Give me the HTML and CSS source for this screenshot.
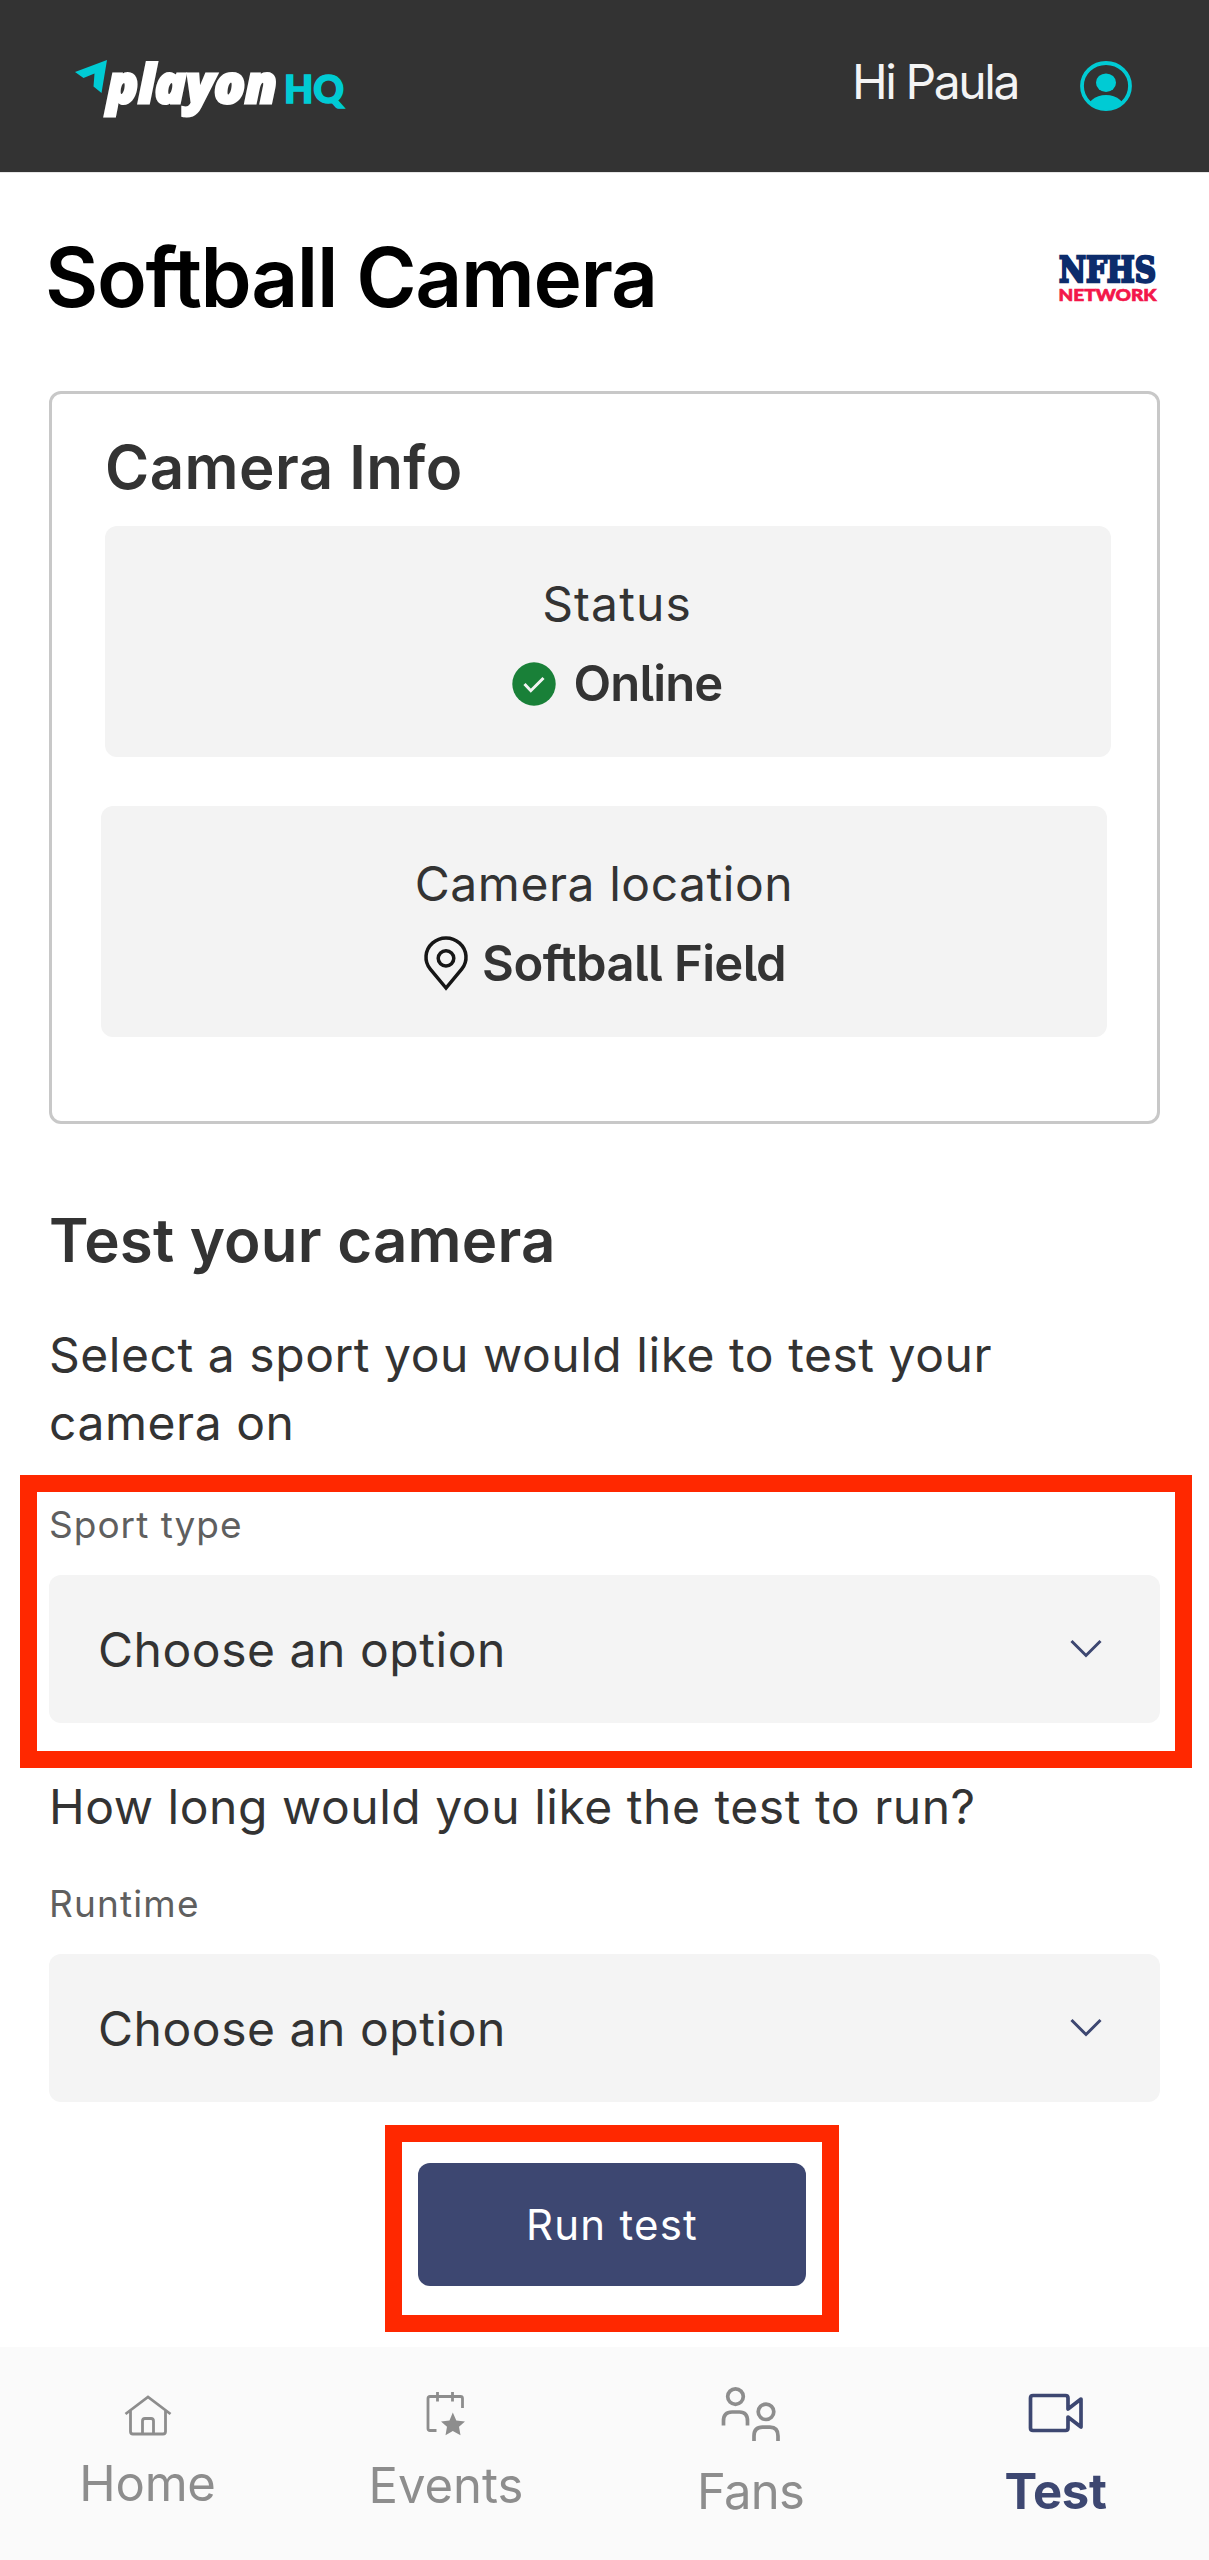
FILE: index.html
```html
<!DOCTYPE html>
<html lang="en">
<head>
<meta charset="utf-8">
<title>Softball Camera</title>
<link rel="stylesheet" href="styles.css">
</head>
<body>
<header class="topbar">
  <svg class="logo" width="276" height="66" viewBox="0 0 276 66" role="img" aria-label="playon HQ">
    <path d="M0 12 32 0 26.5 33 18.5 26.5 19.5 13.5 8.5 18Z" fill="#00cbd4"/>
    <text class="logo-word" x="32" y="42.500" textLength="170" lengthAdjust="spacingAndGlyphs">playon</text>
    <text class="logo-hq" x="209" y="42.500" textLength="60" lengthAdjust="spacingAndGlyphs">HQ</text>
  </svg>
  <div class="account">
    <span class="greeting">Hi Paula</span>
    <svg width="52" height="50" viewBox="0 0 52 50">
      <defs><clipPath id="face"><ellipse cx="26" cy="25" rx="24.500" ry="23.500"/></clipPath></defs>
      <ellipse cx="26" cy="25" rx="24" ry="23" fill="none" stroke="#00cbd4" stroke-width="3.800"/>
      <ellipse cx="26" cy="21.700" rx="10" ry="9.300" fill="#00cbd4"/>
      <ellipse cx="26" cy="51" rx="20" ry="17" fill="#00cbd4" clip-path="url(#face)"/>
    </svg>
  </div>
</header>

<main class="page">
  <div class="title-row">
    <h1 class="title">Softball Camera</h1>
    <svg class="nfhs" width="98" height="50" viewBox="0 0 98 50" role="img" aria-label="NFHS Network">
      <text class="nfhs-main" x="0" y="28" textLength="97" lengthAdjust="spacingAndGlyphs">NFHS</text>
      <text class="nfhs-sub" x="-0.500" y="46.800" textLength="98" lengthAdjust="spacingAndGlyphs">NETWORK</text>
    </svg>
  </div>

  <section class="card">
    <h2 class="heading">Camera Info</h2>
    <div class="info info-status">
      <div class="info-label status-label">Status</div>
      <div class="info-value">
        <svg width="44" height="44" viewBox="0 0 44 44"><circle cx="22" cy="22" r="21.700" fill="#198038"/><path d="M12.500 22 18.800 28.700 31.500 16" fill="none" stroke="#f3f3f3" stroke-width="3"/></svg>
        <span class="online">Online</span>
      </div>
    </div>
    <div class="info info-location">
      <div class="info-label">Camera location</div>
      <div class="info-value pin-row">
        <svg width="44" height="54" viewBox="0 0 44 54" fill="none" stroke="#161616" stroke-width="3.500"><path d="M22 51 6.300 32.200A20 19.300 0 1 1 37.700 32.200Z"/><ellipse cx="22" cy="21.300" rx="7.800" ry="7.600"/></svg>
        <span class="field-name">Softball Field</span>
      </div>
    </div>
  </section>

  <section class="test">
    <h2 class="heading test-heading">Test your camera</h2>
    <p class="copy">Select a sport you would like to test your<br>camera on</p>
    <div class="field">
      <span class="field-label">Sport type</span>
      <div class="select">
        <span>Choose an option</span>
        <svg width="32" height="20" viewBox="0 0 32 20" fill="none" stroke="#3d4771" stroke-width="3"><path d="M1.500 2 16 16.500 30.500 2"/></svg>
      </div>
      <div class="marker marker-field"></div>
    </div>
    <p class="copy question">How long would you like the test to run?</p>
    <div class="field">
      <span class="field-label runtime">Runtime</span>
      <div class="select">
        <span>Choose an option</span>
        <svg width="32" height="20" viewBox="0 0 32 20" fill="none" stroke="#3d4771" stroke-width="3"><path d="M1.500 2 16 16.500 30.500 2"/></svg>
      </div>
    </div>
    <div class="action">
      <button class="run" type="button">Run test</button>
      <div class="marker marker-run"></div>
    </div>
  </section>
</main>

<nav class="tabs">
  <a class="tab tab-home">
    <svg width="48" height="42" viewBox="0 0 48 42" fill="none" stroke="#8d8d8d" stroke-width="2.800"><path d="M1.500 19 24 2 46.500 19M6.500 16V36.500Q6.500 39 9 39H39Q41.500 39 41.500 36.500V16M18.500 39V26Q18.500 23.500 21 23.500H27Q29.500 23.500 29.500 26V39"/></svg>
    <span>Home</span>
  </a>
  <a class="tab tab-events">
    <svg width="40" height="44" viewBox="0 0 40 44" fill="none" stroke="#8d8d8d" stroke-width="2.800"><path d="M10.500 38.500H4Q2 38.500 2 36.500V6.500Q2 4.500 4 4.500H34.500Q36.500 4.500 36.500 6.500V16M11.500 0V9.500M26.500 0V9.500"/><path d="M26.800 20.500 30.300 28.500 39 29.500 33 34.700 34.500 43.300 26.800 39 19.500 43.300 21 34.700 15 29.500 23.500 28.500Z" fill="#8d8d8d" stroke="none"/></svg>
    <span>Events</span>
  </a>
  <a class="tab tab-fans">
    <svg width="60" height="55" viewBox="0 0 60 55" fill="none" stroke="#8d8d8d" stroke-width="3.700"><ellipse cx="14.500" cy="9.600" rx="7.800" ry="7.700"/><path d="M2.500 38.500V34Q2.500 25 11 25H18.500Q26.500 25 26.500 34V38.500"/><ellipse cx="45" cy="24.800" rx="7.800" ry="7.700"/><path d="M33 54V49Q33 40.200 41.500 40.200H49Q57 40.200 57 49V54"/></svg>
    <span>Fans</span>
  </a>
  <a class="tab tab-test">
    <svg width="56" height="40" viewBox="0 0 56 40" fill="none" stroke="#3d4771" stroke-width="3.700" stroke-linejoin="round"><path d="M40 16V5Q40 2.500 37.500 2.500H5Q2.500 2.500 2.500 5V35Q2.500 37.500 5 37.500H37.500Q40 37.500 40 35V24L53 34V6Z"/></svg>
    <span>Test</span>
  </a>
</nav>
</body>
</html>
```
FILE: styles.css
```css
* { box-sizing: border-box; }

body {
  margin: 0;
  height: 2560px;
  display: flex;
  flex-direction: column;
  background: #fff;
  color: #333;
  font-family: Inter, "Liberation Sans", sans-serif;
  font-size: 48px;
}

h1, h2, p { margin: 0; }
svg { display: block; flex: none; overflow: visible; }

.topbar {
  height: 173px;
  display: flex;
  justify-content: space-between;
  align-items: flex-start;
  padding: 60px 77px 0 75px;
  background: #333;
  border-bottom: 1px solid #e6e6e6;
}
.logo-word {
  font: italic 800 53px "Open Sans", sans-serif;
  fill: #fff;
  stroke: #fff;
  stroke-width: 3px;
}
.logo-hq {
  font: 900 37px Lato, sans-serif;
  fill: #00cbd4;
  stroke: #00cbd4;
  stroke-width: 1.5px;
}
.account { display: flex; gap: 62px; padding-top: 1px; }
.greeting {
  line-height: 42px;
  color: #f4f4f4;
  letter-spacing: -2.430px;
}

.page { height: 2174px; padding: 56px 49px 0; }
.title-row { height: 98px; display: flex; justify-content: space-between; }
.title {
  margin-left: -4px;
  color: #000;
  font-size: 82px;
  font-weight: 600;
  line-height: 98px;
  letter-spacing: -1.390px;
  white-space: nowrap;
}
.nfhs { margin: 25px 3px 0 0; }
.nfhs-main {
  font: bold 36px "DejaVu Serif", serif;
  fill: #0c2c6c;
  stroke: #0c2c6c;
  stroke-width: 2.600px;
}
.nfhs-sub {
  font: 900 17.500px Lato, sans-serif;
  fill: #f3174a;
  stroke: #f3174a;
  stroke-width: .700px;
}

.card {
  width: 1111px;
  height: 733px;
  margin-top: 64px;
  padding: 43px 49px 0 49px;
  border: 3px solid #c8c8c8;
  border-radius: 12px;
}
.heading {
  font-size: 60px;
  font-weight: 600;
  line-height: 60px;
  letter-spacing: .450px;
  margin-left: 4px;
}
.info {
  width: 1006px;
  height: 231px;
  padding-top: 44px;
  border-radius: 12px;
  background: #f3f3f3;
  text-align: center;
  line-height: 68px;
}
.info-status { margin: 29px 0 0 4px; padding-left: 18px; }
.info-location { margin-top: 49px; }
.info-label { letter-spacing: .550px; }
.status-label { letter-spacing: 1.100px; }
.info-value {
  height: 68px;
  margin-top: 12px;
  display: flex;
  justify-content: center;
  align-items: center;
  gap: 18px;
  font-size: 49px;
  font-weight: 600;
  font-feature-settings: "cv05";
}
.pin-row { gap: 14px; padding-left: 2px; }
.online { letter-spacing: -.850px; }
.field-name { letter-spacing: -.580px; }

.test { display: flex; flex-direction: column; margin-top: 86px; }
.test-heading { letter-spacing: .210px; margin-left: 0; }
.copy { margin-top: 51px; line-height: 68px; letter-spacing: .540px; }
.question { margin: 50px 0 0 0; }
.field { position: relative; margin-top: 43px; }
.question + .field { margin-top: 38px; }
.field-label {
  display: block;
  color: #5f5f5f;
  font-size: 37px;
  line-height: 50px;
  letter-spacing: 1.010px;
}
.runtime { letter-spacing: 1.150px; }
.select {
  width: 1111px;
  height: 148px;
  margin-top: 25px;
  padding: 0 58px 0 49px;
  display: flex;
  align-items: center;
  justify-content: space-between;
  border-radius: 12px;
  background: #f4f4f4;
  letter-spacing: .540px;
}
.marker { position: absolute; border: 17px solid #ff2800; pointer-events: none; }
.marker-field { left: -29px; top: -25px; width: 1172px; height: 293px; }

.action { position: relative; width: 388px; margin: 61px 0 0 369px; }
.run {
  display: block;
  width: 388px;
  height: 123px;
  padding: 0;
  border: 0;
  border-radius: 12px;
  background: #3d4771;
  color: #fff;
  font: 400 42px/123px Inter, "Liberation Sans", sans-serif;
  letter-spacing: 1.250px;
}
.marker-run { left: -33px; top: -38px; width: 454px; height: 207px; }

.tabs {
  height: 213px;
  display: grid;
  grid-template-columns: 295px 302px 307px 303px;
  background: #fafafa;
  color: #8d8d8d;
  font-size: 49px;
  line-height: 60px;
}
.tab { display: flex; flex-direction: column; align-items: center; }
.tab-home { padding-top: 48px; gap: 17px; letter-spacing: -.240px; }
.tab-events { padding-top: 45px; gap: 20px; }
.tab-fans { padding-top: 40px; gap: 20px; letter-spacing: -.730px; }
.tab-test { padding-top: 46px; gap: 29px; color: #3d4771; font-weight: 700; letter-spacing: -.340px; }
```
